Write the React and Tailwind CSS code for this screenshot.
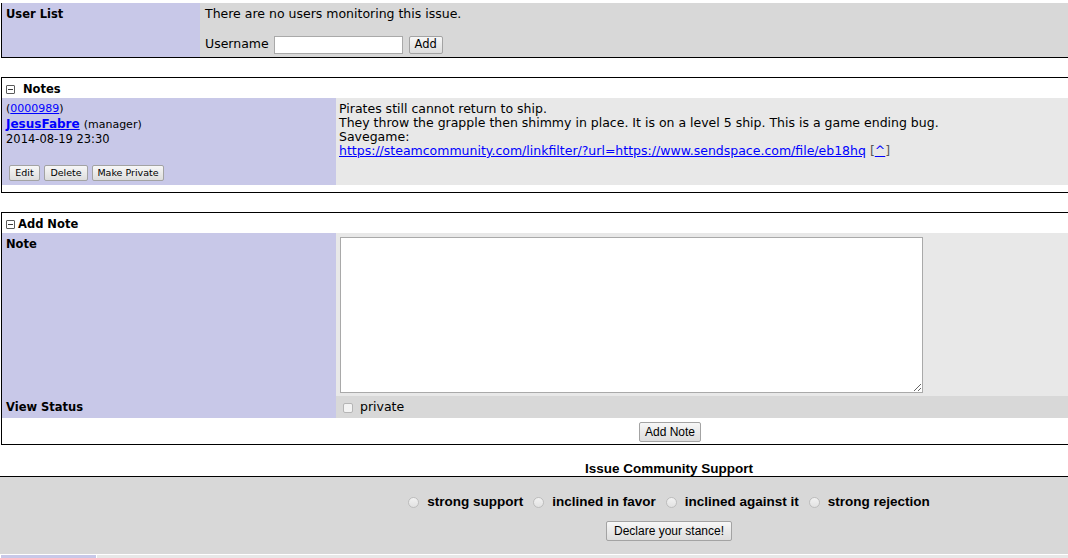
import React from 'react';

const btn =
  "rounded-[2px] border border-[#a3a3a3] bg-linear-to-b from-[#f7f7f7] to-[#dddddd] text-black leading-none";

function Toggle() {
  return (
    <span className="relative inline-block w-[9px] h-[9px] border border-[#5a5a5a] rounded-[1px] bg-white align-middle">
      <span className="absolute left-[1px] right-[1px] top-[3px] h-px bg-[#3a3a3a]" />
    </span>
  );
}

function Radio() {
  return (
    <span className="inline-block w-[11px] h-[11px] rounded-full border border-[#bdbdbd] bg-linear-to-b from-[#f2f2f2] to-[#e2e2e2]" />
  );
}

export default function App() {
  const stances = ['strong support', 'inclined in favor', 'inclined against it', 'strong rejection'];

  return (
    <div className="w-[1068px] h-[558px] overflow-hidden bg-white text-black font-['DejaVu_Sans',sans-serif] text-[12.5px]">
      <div className="w-[1338px] pt-[3px]">
        {/* User List */}
        <div className="ml-px flex border-l border-b border-black">
          <div className="w-[198px] bg-[#c8c8e8] pl-[4px] pt-[3px] font-bold text-[11.5px] leading-[16px]">User List</div>
          <div className="flex-1 bg-[#d8d8d8] pl-[5px] pt-[3px] pb-[4px]">
            <div className="leading-[16px]">There are no users monitoring this issue.</div>
            <div className="mt-[14px] flex items-center h-[17px]">
              <span>Username</span>
              <input className="ml-[5px] w-[129px] h-[18px] border border-[#a9a9a9] bg-white" />
              <button className={`${btn} ml-[6px] w-[34px] h-[18px] text-[11.5px]`}>Add</button>
            </div>
          </div>
        </div>

        {/* Notes */}
        <div className="ml-px mt-[19px] border-l border-t border-b border-black">
          <div className="h-[20px] flex items-center pt-[3px] pl-[4px] font-bold text-[11.5px]">
            <Toggle />
            <span className="ml-[8px]">Notes</span>
          </div>
          <div className="flex h-[87px]">
            <div className="w-[334px] bg-[#c8c8e8] pl-[4px] pt-[4px] flex flex-col">
              <div className="h-[14px] leading-[14px] text-[11px]">
                (<a href="#" className="text-[#0000ff] underline">0000989</a>)
              </div>
              <div className="h-[16px] flex items-baseline">
                <a href="#" className="text-[#0000ff] underline font-bold text-[12px] leading-[16px]">JesusFabre</a>
                <span className="ml-[4px] text-[11px] leading-[16px]">(manager)</span>
              </div>
              <div className="h-[14px] text-[11.5px] leading-[14px]">2014-08-19 23:30</div>
              <div className="mt-[19px] ml-[3px] flex gap-[4px] text-[9.5px]">
                <button className={`${btn} w-[31px] h-[16px]`}>Edit</button>
                <button className={`${btn} w-[44px] h-[16px]`}>Delete</button>
                <button className={`${btn} w-[72px] h-[16px]`}>Make Private</button>
              </div>
            </div>
            <div className="flex-1 bg-[#e8e8e8] pl-[3px] pt-[4px] leading-[14px]">
              <div>Pirates still cannot return to ship.</div>
              <div>They throw the grapple then shimmy in place. It is on a level 5 ship. This is a game ending bug.</div>
              <div>Savegame:</div>
              <div>
                <a href="#" className="text-[#0000ff] underline">https://steamcommunity.com/linkfilter/?url=https://www.sendspace.com/file/eb18hq</a>
                <span className="text-[#555]"> [<a href="#" className="text-[#0000ff] underline">^</a>]</span>
              </div>
            </div>
          </div>
          <div className="h-[7px]" />
        </div>

        {/* Add Note */}
        <div className="ml-px mt-[19px] border-l border-t border-b border-black">
          <div className="h-[20px] flex items-center pt-[3px] pl-[4px] font-bold text-[11.5px]">
            <Toggle />
            <span className="ml-[3px]">Add Note</span>
          </div>
          <div className="flex">
            <div className="w-[334px] bg-[#c8c8e8] pl-[4px] pt-[3px] font-bold text-[11.5px] leading-[16px]">Note</div>
            <div className="flex-1 bg-[#e8e8e8] pl-[4px] pt-[4px] pb-[3px]">
              <textarea className="block w-[583px] h-[156px] border border-[#a9a9a9] bg-white resize" />
            </div>
          </div>
          <div className="flex h-[22px]">
            <div className="w-[334px] bg-[#c8c8e8] pl-[4px] pt-px flex items-center font-bold text-[11.5px]">View Status</div>
            <div className="flex-1 bg-[#d8d8d8] pl-[7px] pt-px flex items-center">
              <span className="inline-block w-[10px] h-[10px] rounded-[2px] border border-[#b5b5b5] bg-[#f3f3f3]" />
              <span className="ml-[7px]">private</span>
            </div>
          </div>
          <div className="h-[26px] pt-px flex items-center justify-center">
            <button className={`${btn} h-[20px] px-[5px] font-['Liberation_Sans',sans-serif] text-[12px]`}>Add Note</button>
          </div>
        </div>

        {/* Issue Community Support */}
        <div className="mt-[15px] pt-[2px] text-center font-bold font-['Liberation_Sans',sans-serif] text-[13.5px] leading-[14px]">
          Issue Community Support
        </div>
        <div className="border-t border-black bg-[#d8d8d8] pt-[17px] pb-[13px] font-['Liberation_Sans',sans-serif]">
          <div className="flex items-center justify-center h-[16px] text-[13.5px] font-bold">
            {stances.map((s, i) => (
              <span key={s} className={`flex items-center ${i > 0 ? 'ml-[10px]' : ''}`}>
                <Radio />
                <span className="ml-[8px]">{s}</span>
              </span>
            ))}
          </div>
          <div className="mt-[11px] flex justify-center">
            <button className={`${btn} h-[20px] px-[7px] text-[12px]`}>Declare your stance!</button>
          </div>
        </div>
        <div className="mt-px ml-px flex h-[20px]">
          <div className="w-[95px] bg-[#c8c8e8]" />
          <div className="flex-1 ml-px bg-[#e8e8e8]" />
        </div>
      </div>
    </div>
  );
}
